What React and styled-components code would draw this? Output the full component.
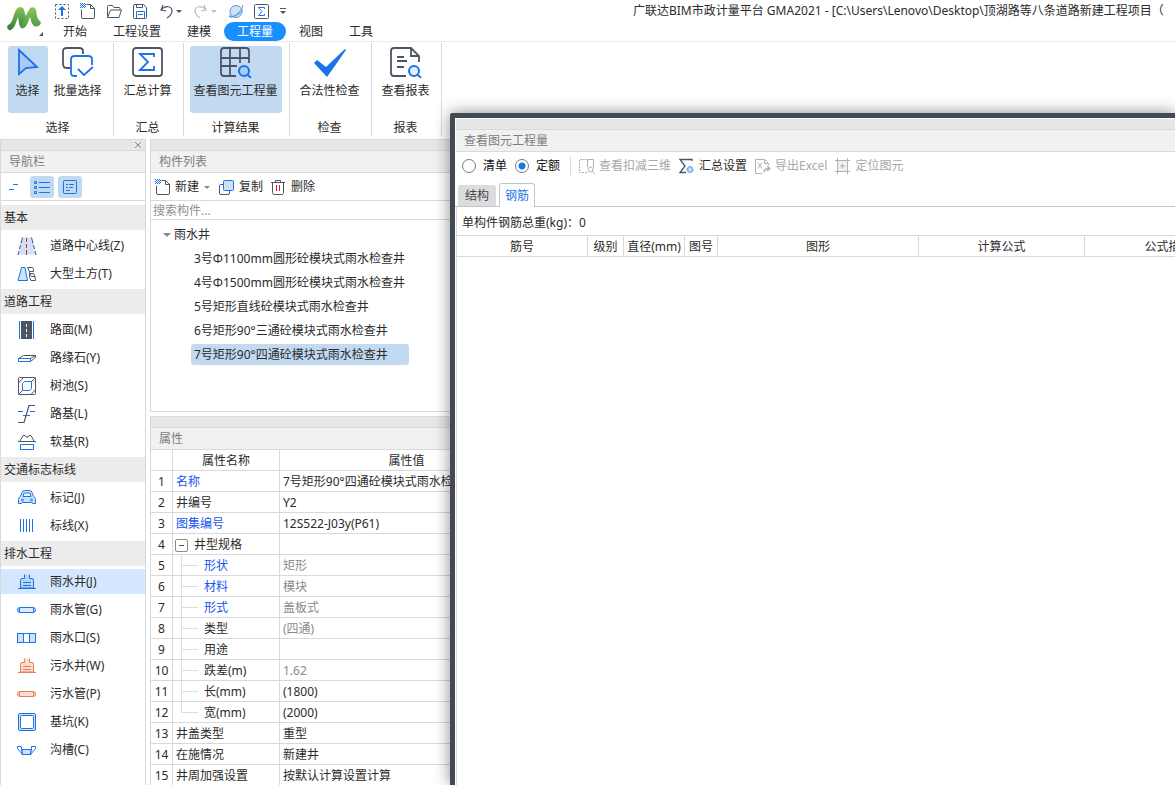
import React, { useState } from "react";
import styled, { createGlobalStyle } from "styled-components";

const BLUE = "#1a73e8";
const DARK = "#4d5464";
const PALE = "#cfe2fa";
const MUTED = "#b0b0b0";
const ORANGE = "#e8804f";
const LINE = "#d9d9d9";

const GlobalStyle = createGlobalStyle`
  *, *::before, *::after {
    box-sizing: border-box;
  }

  body {
    margin: 0;
    background: #fff;
  }

  body, button, input, table {
    font-family: "Noto Sans", "Noto Sans CJK SC", sans-serif;
    font-size: 12px;
    line-height: 16px;
    color: #2b2b2b;
  }

  button {
    border: 0;
    padding: 0;
    background: none;
    white-space: nowrap;
  }

  svg {
    display: block;
    flex: none;
  }
`;

const Page = styled.div`
  position: relative;
  display: flex;
  flex-direction: column;
  height: 100vh;
  overflow: hidden;
`;

/* ---------- header ---------- */

const Header = styled.header`
  display: grid;
  flex: none;
  grid-template-columns: 50px minmax(0, 1fr);
  border-bottom: 1px solid #ececec;
`;

const LogoButton = styled.button`
  grid-row: span 2;
`;

const TitleBar = styled.div`
  display: flex;
  align-items: center;
  height: 21px;
  padding-left: 4px;
`;

const QuickBar = styled.div`
  display: flex;
  flex: none;
  align-items: center;
  gap: 10px;
  width: 579px;
`;

const QuickButton = styled.button`
  display: flex;
  align-items: center;
  gap: 1px;
`;

const WindowTitle = styled.div`
  flex: 1;
  overflow: hidden;
  white-space: nowrap;
`;

const Menu = styled.nav`
  display: flex;
  padding-top: 1px;
`;

const MenuItem = styled.button`
  height: 19px;
  line-height: 19px;
  padding: 0 13px;
  border-radius: 10px;
  color: ${({ $active }) => ($active ? "#fff" : "#2b2b2b")};
  background: ${({ $active }) => ($active ? "#1890ff" : "transparent")};
`;

const Ribbon = styled.div`
  display: flex;
  flex: none;
  height: 97px;
  padding: 1px 0 3px 4px;
`;

const RibbonGroup = styled.section`
  display: flex;
  flex-direction: column;
  align-items: center;
  justify-content: space-between;
  width: ${({ $width }) => $width}px;
  padding: 3px 2px 0 0;
  border-right: 1px solid ${LINE};
`;

const RibbonButtons = styled.div`
  display: flex;
`;

const RibbonButton = styled.button`
  display: flex;
  flex-direction: column;
  align-items: center;
  gap: 5px;
  width: ${({ $width }) => $width}px;
  height: 67px;
  border-radius: 3px;
  background: ${({ $active }) => ($active ? "#c2d9f2" : "transparent")};
`;

/* ---------- panels ---------- */

const Body = styled.div`
  display: flex;
  flex: 1;
  gap: 4px;
  min-height: 0;
`;

const Panel = styled.section`
  display: flex;
  flex-direction: column;
  flex: ${({ $flex }) => $flex || "none"};
  width: ${({ $width }) => ($width ? `${$width}px` : "auto")};
  min-height: 0;
  overflow: hidden;
  border: 1px solid ${LINE};
  border-bottom: 0;
  background: #fff;
`;

const Strip = styled.div`
  display: flex;
  flex: none;
  align-items: center;
  justify-content: flex-end;
  height: 11px;
  padding-right: 3px;
  background: #e7e7e7;
  border-bottom: 1px solid ${LINE};
`;

const PanelTitle = styled.h2`
  flex: none;
  height: 22px;
  margin: 0;
  padding-left: 8px;
  font-size: 12px;
  font-weight: 400;
  line-height: 21px;
  color: #7d7d7d;
  background: #f1f1f1;
  border-bottom: 1px solid ${LINE};
`;

const ModeBar = styled.div`
  display: flex;
  flex: none;
  align-items: center;
  gap: 4px;
  height: 28px;
  padding-left: 1px;
  border-bottom: 1px solid ${LINE};
`;

const ModeButton = styled.button`
  display: flex;
  align-items: center;
  justify-content: center;
  width: 24px;
  height: 22px;
  border-radius: 3px;
  background: ${({ $active }) => ($active ? "#c2d9f2" : "transparent")};
`;

const NavList = styled.nav`
  display: flex;
  flex-direction: column;
  gap: 3px;
  padding-top: 4px;
`;

const NavHeading = styled.h3`
  height: 25px;
  margin: 0;
  padding-left: 3px;
  font-size: 12px;
  font-weight: 400;
  line-height: 25px;
  background: #ececec;
`;

const NavItem = styled.button`
  display: flex;
  align-items: center;
  gap: 13px;
  height: 25px;
  padding-left: 16px;
  background: ${({ $active }) => ($active ? "#d4e7ff" : "transparent")};
`;

const Middle = styled.div`
  display: flex;
  flex: none;
  flex-direction: column;
  gap: 4px;
  width: 385px;
`;

const ComponentPanel = styled(Panel)`
  height: 273px;
  border-bottom: 1px solid ${LINE};
`;

const ToolBar = styled.div`
  display: flex;
  flex: none;
  align-items: center;
  gap: 8px;
  height: 28px;
  padding-left: 4px;
  border-bottom: 1px solid ${LINE};
`;

const ToolButton = styled.button`
  display: flex;
  align-items: center;
  gap: 4px;
  color: ${({ disabled }) => (disabled ? "#a8a8a8" : "#2b2b2b")};
`;

const SearchInput = styled.input`
  flex: none;
  height: 19px;
  padding: 0 2px;
  border: 0;
  border-bottom: 1px solid ${LINE};
  outline: none;

  &::placeholder {
    color: #8f8f8f;
    opacity: 1;
  }
`;

const Tree = styled.div`
  display: flex;
  flex-direction: column;
  align-items: flex-start;
  gap: 3px;
  padding: 4px 0 0 12px;
`;

const TreeRoot = styled.button`
  display: flex;
  align-items: center;
  gap: 3px;
  height: 21px;
`;

const TreeLeaf = styled.button`
  width: 218px;
  height: 21px;
  margin-left: 28px;
  padding-left: 3px;
  text-align: left;
  border-radius: 3px;
  background: ${({ $active }) => ($active ? "#c2d9f2" : "transparent")};
`;

const Table = styled.table`
  flex: none;
  width: ${({ $width }) => ($width ? `${$width}px` : "100%")};
  table-layout: fixed;
  border-collapse: separate;
  border-spacing: 0;

  th, td {
    height: 21px;
    padding: 2px 3px 0;
    font-weight: 400;
    line-height: 18px;
    white-space: nowrap;
    overflow: hidden;
    border-right: 1px solid ${LINE};
    border-bottom: 1px solid ${LINE};
  }
`;

const IndexCell = styled.td`
  text-align: center;

  && {
    padding-left: 0;
    padding-right: 0;
  }
`;

const NameCell = styled.td`
  color: ${({ $link }) => ($link ? "#1554f0" : "#2b2b2b")};

  && {
    ${({ $child, $last }) =>
      $child &&
      `
      padding-left: 31px;
      background:
        linear-gradient(#dedede, #dedede) 8px 0 / 1px ${$last ? "10px" : "100%"} no-repeat,
        linear-gradient(#dedede, #dedede) 8px 10px / 17px 1px no-repeat;
    `}
  }
`;

const ValueCell = styled.td`
  color: ${({ $muted }) => ($muted ? "#8a8a8a" : "#2b2b2b")};
`;

const FoldLabel = styled.span`
  display: flex;
  align-items: center;
  gap: 6px;
  margin-left: -1px;
`;

const Fold = styled.button`
  display: flex;
  align-items: center;
  justify-content: center;
  width: 13px;
  height: 13px;
  border: 1px solid #8a8a8a;
  border-radius: 2px;
`;

/* ---------- quantity window ---------- */

const Dialog = styled.section`
  position: absolute;
  top: 113px;
  right: 0;
  bottom: 0;
  left: 450px;
  display: flex;
  flex-direction: column;
  overflow: hidden;
  background: #fff;
  border: solid #434a54;
  border-width: 5px 0 0 5px;
  border-radius: 3px 0 0 0;
  box-shadow: 0 0 16px rgba(0, 0, 0, 0.45);
`;

const DialogTop = styled.div`
  padding: 1px 0 0 1px;
`;

const DialogTools = styled.div`
  display: flex;
  align-items: center;
  gap: 8px;
  height: 28px;
  padding-left: 6px;
`;

const Radio = styled.label`
  display: flex;
  align-items: center;
  gap: 7px;
  color: #111;

  input {
    appearance: none;
    width: 14px;
    height: 14px;
    margin: 0;
    border: 1px solid #777;
    border-radius: 50%;
  }

  input:checked {
    background: radial-gradient(circle, ${BLUE} 3px, #fff 4px);
  }
`;

const Divider = styled.span`
  width: 1px;
  height: 18px;
  margin-left: 2px;
  background: ${LINE};
`;

const Tabs = styled.div`
  display: flex;
  align-items: flex-end;
  gap: 3px;
  height: 27px;
  padding-left: 3px;
  border-bottom: 1px solid #c4c4cc;
`;

const Tab = styled.button`
  height: ${({ $active }) => ($active ? 24 : 21)}px;
  padding: 0 ${({ $active }) => ($active ? 5 : 7)}px;
  margin-bottom: ${({ $active }) => ($active ? -1 : 0)}px;
  color: ${({ $active }) => ($active ? BLUE : "#444")};
  background: ${({ $active }) => ($active ? "#fff" : "#dcdcdc")};
  border: ${({ $active }) => ($active ? "1px solid #c4c4cc" : "0")};
  border-bottom: 0;
  border-radius: 3px 3px 0 0;
`;

const DialogContent = styled.div`
  flex: 1;
  margin-left: 1px;
  border-left: 1px solid ${LINE};
`;

const Summary = styled.p`
  height: 29px;
  margin: 0;
  padding-left: 5px;
  line-height: 32px;
  border-bottom: 1px solid ${LINE};
`;

/* ---------- icons ---------- */

const Icon = ({ size = 16, color = DARK, children }) => (
  <svg width={size} height={size} viewBox={`0 0 ${size} ${size}`} fill="none" stroke={color} aria-hidden="true">
    {children}
  </svg>
);

const Caret = ({ color = "#555", path = "M1 3h6L4 6z" }) => (
  <svg width="8" height="8" viewBox="0 0 8 8" aria-hidden="true">
    <path d={path} fill={color} />
  </svg>
);

const Logo = () => (
  <svg width="50" height="40" viewBox="0 0 50 40" fill="none" aria-hidden="true">
    <defs>
      <linearGradient id="leaf" x1="0" y1="0" x2="0" y2="1">
        <stop offset="0" stopColor="#8cc152" />
        <stop offset="1" stopColor="#2f7d42" />
      </linearGradient>
      <linearGradient id="leafLight" x1="0" y1="0" x2="0" y2="1">
        <stop offset="0" stopColor="#8fc457" />
        <stop offset="1" stopColor="#4a9a4c" />
      </linearGradient>
    </defs>
    <path d="M8 24c5-2 5-10 8-15 2-4 7-4 8 0l3 11-3 5c-3 2-5 0-5-3l-1-6c-2 5-3 11-7 13-3 1-5-3-3-5z" fill="url(#leaf)" />
    <path d="M21 24c3-4 5-11 8-15 2-4 6-3 7 0 1 5 1 9 4 11 3 3-3 8-7 4-2-2-2-5-3-8-2 5-3 9-6 11-3 1-5-1-3-3z" fill="url(#leafLight)" />
    <path d="M43 31v4h-4z" fill="#555" />
  </svg>
);

const NewIcon = () => (
  <Icon>
    <path d="M6.500 1.500h4l4 4v8.500q0 1.500-1.500 1.500h-10q-1.500 0-1.500-1.500v-7.500M10.500 1.500v4h4" />
    <path d="M0 .5h5M0 2.500h5M0 4.500h5" stroke={BLUE} strokeDasharray="1 1" />
    <path d="M1 1.500h5M1 3.500h5" stroke={BLUE} strokeDasharray="1 1" />
  </Icon>
);

const SigmaIcon = () => (
  <Icon>
    <rect x="0.500" y="1.500" width="14" height="14" rx="1" />
    <path d="M10.500 6v-1.500h-6l3.500 4-3.500 4h6v-1.500" stroke={BLUE} />
  </Icon>
);

const quickActions = [
  { label: "上传", icon: (
    <Icon>
      <rect x="1.500" y="1.500" width="13" height="14" strokeDasharray="2 2" />
      <path d="M8 3l4 4h-3v6h-2v-6h-3z" fill={BLUE} stroke="none" />
    </Icon>
  ) },
  { label: "新建工程", icon: <NewIcon /> },
  { label: "打开", icon: (
    <Icon>
      <path d="M1.500 14v-10.500q0-1 1-1h4l1.500 2h5q1 0 1 1v1.500M1.500 14.500l3-7.500h11l-2.500 7.500z" />
    </Icon>
  ) },
  { label: "保存", icon: (
    <Icon>
      <path d="M1.500 3q0-1.500 1.500-1.500h8.500l3 3v10q0 1-1 1h-11q-1 0-1-1zM4.500 1.500v3h6v-3" />
      <path d="M4.500 15.500v-7h8v7M6 11.500h5" stroke={BLUE} />
    </Icon>
  ) },
  { label: "撤销", menu: "#555", icon: (
    <Icon>
      <path d="M5 2L3 7l5 1M3 7c4-5 11-4 11 1 0 3-2 5-5 7" strokeWidth="1.200" />
    </Icon>
  ) },
  { label: "恢复", menu: "#bbb", icon: (
    <Icon color="#bbb">
      <path d="M11 2l2 5-5 1M13 7c-4-5-11-4-11 1 0 3 2 5 5 7" strokeWidth="1.200" />
    </Icon>
  ) },
  { label: "三维", icon: (
    <Icon color="#5b94de">
      <circle cx="8" cy="8.500" r="6" fill={PALE} />
      <path d="M2.500 11c-3 4 1 4.500 6 .5s8-9 5-9.500M1.500 13.500c3 1 11-2 13-7" />
    </Icon>
  ) },
  { label: "汇总计算", icon: <SigmaIcon /> },
];

const ribbonIcons = {
  select: (
    <Icon size={32} color={BLUE}>
      <path d="M7 4l18 17-11 1-7 6z" fill="#a9cbf5" strokeWidth="1.800" />
    </Icon>
  ),
  batch: (
    <Icon size={32}>
      <path d="M8 22h-3q-4 0-4-4v-13q0-3 4-3h12q4 0 4 3v3" strokeWidth="1.800" />
      <path d="M15 30h-2q-4 0-4-3v-14q0-3 4-3h13q4 0 4 3v6M16 23l6 6 9-8" stroke={BLUE} strokeWidth="1.800" />
    </Icon>
  ),
  sum: (
    <Icon size={32}>
      <rect x="1" y="2" width="29" height="28" rx="3" strokeWidth="1.800" />
      <path d="M22 11v-3h-14l8 8-8 8h14v-4" stroke={BLUE} strokeWidth="1.800" />
    </Icon>
  ),
  grid: (
    <Icon size={32}>
      <path d="M16 30h-12q-3 0-3-3v-22q0-3 3-3h22q3 0 3 3v12M1 12h28M1 20h16M10 2v28M20 2v15" strokeWidth="1.800" />
      <circle cx="24" cy="25" r="5" stroke={BLUE} strokeWidth="2" fill="#a9cbf5" />
      <path d="M27 28l4 4" stroke={BLUE} strokeWidth="2" />
    </Icon>
  ),
  check: (
    <Icon size={32}>
      <path d="M0 17l3-3 9 7 19-18 1 1-19 27z" fill={BLUE} stroke="none" />
    </Icon>
  ),
  report: (
    <Icon size={32}>
      <path d="M16 30h-12q-3 0-3-3v-22q0-3 3-3h17l8 8v6M21 2v8h8M7 11h7M7 15h10M7 21h7" strokeWidth="1.800" />
      <circle cx="24" cy="25" r="5" stroke={BLUE} strokeWidth="2" fill="#e6effb" />
      <path d="M27 28l4 4" stroke={BLUE} strokeWidth="2" />
    </Icon>
  ),
};

const WellIcon = ({ color, fill }) => (
  <Icon size={20} color={color}>
    <path d="M7.500 2.500v4h-2.500q-1.500 0-1.500 2v7.500h13v-7.500q0-2-1.500-2h-2.500v-4" fill={fill} />
    <path d="M1 16.500h18M6 10.500h8M6 13.500h8" />
  </Icon>
);

const PipeIcon = ({ color, fill }) => (
  <Icon size={20} color={color}>
    <rect x="0.500" y="7.500" width="18" height="5" rx="2.500" fill={fill} />
    <path d="M2.500 8v4M16.500 8v4" />
  </Icon>
);

const navIcons = {
  centerLine: (
    <Icon size={20}>
      <path d="M5.500 1.500h9l4 17h-17z" fill={PALE} stroke="none" />
      <path d="M5.500 1.500l-1.500 6M3.500 9l-1 4M2 15l-1 4M14.500 1.500l1.500 6M16.500 9l1 4M18 15l1 4" />
      <path d="M9.500 2v4M9.500 8v4M9.500 14v5" stroke="#e02020" />
    </Icon>
  ),
  earthwork: (
    <Icon size={20}>
      <path d="M4.500 3.500h3.500l2.500 13h-9.500z" fill={PALE} stroke={BLUE} />
      <path d="M10.500 3.500h5q1.500 2 1 4h-4zM12.500 9.500h4q2 4 2 7h-4.500q-2-3-1.500-7zM12.500 7.500v2l2 3h4" />
    </Icon>
  ),
  pavement: (
    <Icon size={20}>
      <path d="M4 1h11v18h-11z" fill={DARK} stroke="none" />
      <path d="M2.500 1v18M16.500 1v18" stroke={BLUE} />
      <path d="M9.500 4v3M9.500 9v3M9.500 14v3" stroke="#fff" />
    </Icon>
  ),
  curb: (
    <Icon size={20}>
      <path d="M1.500 10.500l5-3h12v2l-5 4M13.500 10.500l5-3" />
      <path d="M1.500 10.500h12v3h-12z" stroke={BLUE} />
    </Icon>
  ),
  treePit: (
    <Icon size={20}>
      <rect x="1.500" y="1.500" width="17" height="17" rx="1" />
      <path d="M1.500 7l5-5.500M14 18.500l4.500-5M1.500 18.500l4-4M14.500 5.500l4-4" />
      <path d="M5.500 7.500l2-2h7v7l-2 2h-7z" stroke={BLUE} />
    </Icon>
  ),
  subgrade: (
    <Icon size={20}>
      <path d="M1 18.500h6l5-17h6" strokeWidth="1.200" />
      <path d="M1 7.500h5M13 7.500h5M6 11.500h7" stroke={BLUE} />
    </Icon>
  ),
  softBase: (
    <Icon size={20}>
      <path d="M1 9.500h18M3 9l3-5.500h2l1 1.500h2l1-1.500h2l3 5.500" />
      <path d="M3.500 12.500h13v5h-13z" stroke={BLUE} />
    </Icon>
  ),
  marker: (
    <Icon size={20} color={BLUE}>
      <path d="M3.500 8.500l1.500-4q.5-2 2.500-2h5q2 0 2.500 2l1.500 4q2 1 2 3v4h-2.500l-1.500-1h-9l-1.500 1h-2.500v-4q0-2 2-3z" fill={PALE} />
      <path d="M6 8.500l1-3.500h6l1 3.500z" fill="#fff" />
      <circle cx="5.500" cy="12" r="1" fill="#fff" />
      <circle cx="14.500" cy="12" r="1" fill="#fff" />
    </Icon>
  ),
  stripes: (
    <Icon size={20} color={BLUE}>
      <path d="M3.500 3v13M6.500 3v13M9.500 3v13M12.500 3v13M15.500 3v13" />
    </Icon>
  ),
  rainWell: <WellIcon color={BLUE} fill="#b8d5f7" />,
  rainPipe: <PipeIcon color={BLUE} fill="#dbe9fb" />,
  inlet: (
    <Icon size={20} color={BLUE}>
      <rect x="0.500" y="5.500" width="18" height="9" fill={PALE} />
      <path d="M6.500 5.500h6v9h-6z" fill="#fff" />
    </Icon>
  ),
  sewageWell: <WellIcon color={ORANGE} fill="#f9ddcf" />,
  sewagePipe: <PipeIcon color={ORANGE} fill="#f9e0d4" />,
  pit: (
    <Icon size={20} color={BLUE}>
      <rect x="1.500" y="1.500" width="17" height="17" rx="1.500" fill={PALE} />
      <rect x="3.500" y="3.500" width="13" height="13" rx="1" fill="#fff" />
    </Icon>
  ),
  trench: (
    <Icon size={20} color={BLUE}>
      <path d="M5 9.500h9v5h-9z" fill={PALE} />
      <path d="M0.500 6.500h4v3l1 5-5-6zM18.500 6.500h-4v3l-1 5 5-6z" fill="#fff" />
    </Icon>
  ),
};

/* ---------- data ---------- */

const menus = ["开始", "工程设置", "建模", "工程量", "视图", "工具"];

const ribbonGroups = [
  { title: "选择", width: 110, items: [
    { label: "选择", icon: "select", width: 40, active: true },
    { label: "批量选择", icon: "batch", width: 60 },
  ] },
  { title: "汇总", width: 70, items: [{ label: "汇总计算", icon: "sum", width: 60 }] },
  { title: "计算结果", width: 106, items: [{ label: "查看图元工程量", icon: "grid", width: 92, active: true }] },
  { title: "检查", width: 82, items: [{ label: "合法性检查", icon: "check", width: 72 }] },
  { title: "报表", width: 70, items: [{ label: "查看报表", icon: "report", width: 60 }] },
];

const navSections = [
  { title: "基本", items: [["道路中心线(Z)", "centerLine"], ["大型土方(T)", "earthwork"]] },
  { title: "道路工程", items: [
    ["路面(M)", "pavement"],
    ["路缘石(Y)", "curb"],
    ["树池(S)", "treePit"],
    ["路基(L)", "subgrade"],
    ["软基(R)", "softBase"],
  ] },
  { title: "交通标志标线", items: [["标记(J)", "marker"], ["标线(X)", "stripes"]] },
  { title: "排水工程", items: [
    ["雨水井(J)", "rainWell"],
    ["雨水管(G)", "rainPipe"],
    ["雨水口(S)", "inlet"],
    ["污水井(W)", "sewageWell"],
    ["污水管(P)", "sewagePipe"],
    ["基坑(K)", "pit"],
    ["沟槽(C)", "trench"],
  ] },
];

const wells = [
  "3号Φ1100mm圆形砼模块式雨水检查井",
  "4号Φ1500mm圆形砼模块式雨水检查井",
  "5号矩形直线砼模块式雨水检查井",
  "6号矩形90°三通砼模块式雨水检查井",
  "7号矩形90°四通砼模块式雨水检查井",
];

const properties = [
  { name: "名称", value: "7号矩形90°四通砼模块式雨水检查井", link: true },
  { name: "井编号", value: "Y2" },
  { name: "图集编号", value: "12S522-J03y(P61)", link: true },
  { name: "井型规格", value: "", fold: true },
  { name: "形状", value: "矩形", link: true, child: true, muted: true },
  { name: "材料", value: "模块", link: true, child: true, muted: true },
  { name: "形式", value: "盖板式", link: true, child: true, muted: true },
  { name: "类型", value: "(四通)", child: true, muted: true },
  { name: "用途", value: "", child: true },
  { name: "跌差(m)", value: "1.62", child: true, muted: true },
  { name: "长(mm)", value: "(1800)", child: true },
  { name: "宽(mm)", value: "(2000)", child: true, last: true },
  { name: "井盖类型", value: "重型" },
  { name: "在施情况", value: "新建井" },
  { name: "井周加强设置", value: "按默认计算设置计算" },
];

const barColumns = [
  ["筋号", 131],
  ["级别", 36],
  ["直径(mm)", 61],
  ["图号", 33],
  ["图形", 201],
  ["计算公式", 166],
  ["公式描述", 168],
];

/* ---------- parts ---------- */

const AppHeader = () => {
  const [menu, setMenu] = useState("工程量");

  return (
    <Header>
      <LogoButton aria-label="应用菜单"><Logo /></LogoButton>
      <TitleBar>
        <QuickBar>
          {quickActions.map((action) => (
            <QuickButton key={action.label} aria-label={action.label}>
              {action.icon}
              {action.menu && <Caret color={action.menu} />}
            </QuickButton>
          ))}
          <QuickButton aria-label="自定义快速访问">
            <svg width="6" height="8" viewBox="0 0 6 8"><path d="M0 1h6v1H0zM0 4h6L3 7z" fill="#555" /></svg>
          </QuickButton>
        </QuickBar>
        <WindowTitle>
          {"广联达BIM市政计量平台 GMA2021 - [C:\\Users\\Lenovo\\Desktop\\顶湖路等八条道路新建工程项目（"}
        </WindowTitle>
      </TitleBar>
      <Menu>
        {menus.map((item) => (
          <MenuItem key={item} $active={item === menu} onClick={() => setMenu(item)}>{item}</MenuItem>
        ))}
      </Menu>
    </Header>
  );
};

const Navigation = () => {
  const [selected, setSelected] = useState("雨水井(J)");

  return (
    <Panel $width={146}>
      <Strip>
        <button aria-label="关闭">
          <svg width="8" height="8" viewBox="0 0 8 8">
            <path d="M1 1l6 6M7 1L1 7" stroke="#888" />
          </svg>
        </button>
      </Strip>
      <PanelTitle>导航栏</PanelTitle>
      <ModeBar>
        <ModeButton aria-label="折叠">
          <Icon color={BLUE}><path d="M3 10.500h5M7 5.500h5" /></Icon>
        </ModeButton>
        <ModeButton $active aria-label="列表">
          <Icon color={BLUE}>
            <path d="M5 3.500h11M5 8.500h11M5 13.500h11" />
            <path d="M.5 2.500h2v2h-2zM.5 7.500h2v2h-2zM.5 12.500h2v2h-2z" />
          </Icon>
        </ModeButton>
        <ModeButton $active aria-label="详情">
          <Icon color={BLUE}>
            <rect x="1.500" y="1.500" width="13" height="13" rx="1" />
            <path d="M4 5.500h2M7 5.500h5M4 8.500h2M7 8.500h4M4 11.500h4" />
          </Icon>
        </ModeButton>
      </ModeBar>
      <NavList>
        {navSections.map((section) => (
          <React.Fragment key={section.title}>
            <NavHeading>{section.title}</NavHeading>
            {section.items.map(([label, icon]) => (
              <NavItem key={label} $active={label === selected} onClick={() => setSelected(label)}>
                {navIcons[icon]}
                {label}
              </NavItem>
            ))}
          </React.Fragment>
        ))}
      </NavList>
    </Panel>
  );
};

const Components = () => {
  const [selected, setSelected] = useState(wells[4]);

  return (
    <ComponentPanel>
      <Strip />
      <PanelTitle>构件列表</PanelTitle>
      <ToolBar>
        <ToolButton><NewIcon />新建<Caret color="#888" /></ToolButton>
        <ToolButton>
          <Icon>
            <path d="M4.500 5.500h-3q-1 0-1 1v7.500q0 1.500 1.500 1.500h7q1.500 0 1.500-1.500v-2" />
            <rect x="4.500" y="1.500" width="10" height="10" rx="1" fill={PALE} stroke={BLUE} />
          </Icon>
          复制
        </ToolButton>
        <ToolButton>
          <Icon>
            <path d="M0 3.500h14M4.500 3.500v-2h5v2M1.500 3.500v10q0 2 2 2h7q2 0 2-2v-10" />
            <path d="M5.500 6v6M8.500 6v6" stroke="#e02020" />
          </Icon>
          删除
        </ToolButton>
      </ToolBar>
      <SearchInput placeholder="搜索构件..." aria-label="搜索构件" />
      <Tree>
        <TreeRoot><Caret color="#888" path="M0 2h8L4 6z" />雨水井</TreeRoot>
        {wells.map((well) => (
          <TreeLeaf key={well} $active={well === selected} onClick={() => setSelected(well)}>{well}</TreeLeaf>
        ))}
      </Tree>
    </ComponentPanel>
  );
};

const Properties = () => (
  <Panel $flex={1}>
    <Strip />
    <PanelTitle>属性</PanelTitle>
    <Table>
      <colgroup>
        <col width="22" />
        <col width="107" />
        <col />
      </colgroup>
      <thead>
        <tr>
          <th aria-label="序号" />
          <th>属性名称</th>
          <th>属性值</th>
        </tr>
      </thead>
      <tbody>
        {properties.map((row, index) => (
          <tr key={row.name}>
            <IndexCell>{index + 1}</IndexCell>
            <NameCell $link={row.link} $child={row.child} $last={row.last}>
              {row.fold ? (
                <FoldLabel>
                  <Fold aria-label="折叠">
                    <svg width="5" height="1" viewBox="0 0 5 1"><path d="M0 0h5v1H0z" fill="#555" /></svg>
                  </Fold>
                  {row.name}
                </FoldLabel>
              ) : row.name}
            </NameCell>
            <ValueCell $muted={row.muted}>{row.value}</ValueCell>
          </tr>
        ))}
      </tbody>
    </Table>
  </Panel>
);

const QuantityDialog = () => {
  const [mode, setMode] = useState("定额");
  const [tab, setTab] = useState("钢筋");

  return (
    <Dialog>
      <DialogTop>
        <Strip />
        <PanelTitle>查看图元工程量</PanelTitle>
        <DialogTools>
          {["清单", "定额"].map((item) => (
            <Radio key={item}>
              <input type="radio" name="mode" checked={mode === item} onChange={() => setMode(item)} />
              {item}
            </Radio>
          ))}
          <Divider />
          <ToolButton disabled>
            <Icon color={MUTED}>
              <path d="M8 14.500h-7.500v-13h8" strokeDasharray="2 1" />
              <path d="M8.500 9v-7.500h6v8" />
              <circle cx="11.500" cy="11.500" r="2.500" />
              <path d="M13 13l3 3" />
            </Icon>
            查看扣减三维
          </ToolButton>
          <ToolButton>
            <Icon>
              <path d="M13 3v-1.500h-12l5 6.500-5 6.500h6" strokeWidth="1.300" />
              <circle cx="11" cy="11.500" r="3" fill="#9cc4f5" stroke={BLUE} strokeDasharray="1 1" />
              <circle cx="11" cy="11.500" r="1" fill="#fff" stroke="none" />
            </Icon>
            汇总设置
          </ToolButton>
          <ToolButton disabled>
            <Icon color={MUTED}>
              <path d="M7 15.500h-6.500v-14h9l4 4v2M9.500 1.500v4h4M3 4.500l4 6M7 4.500l-4 6" />
              <path d="M9 14.500q0-4 5-4M12 8l3 2.500-3 2.500" strokeWidth="1.300" />
            </Icon>
            导出Excel
          </ToolButton>
          <ToolButton disabled>
            <Icon color={MUTED}>
              <path d="M2.500 2.500h10v11h-10z" fill="#f0f0f0" />
              <path d="M0 2.500h15M0 13.500h15M2.500 0v16M12.500 0v16M7.500 5.500v5M5 8h5" />
            </Icon>
            定位图元
          </ToolButton>
        </DialogTools>
      </DialogTop>
      <Tabs>
        {["结构", "钢筋"].map((item) => (
          <Tab key={item} $active={item === tab} onClick={() => setTab(item)}>{item}</Tab>
        ))}
      </Tabs>
      <DialogContent>
        <Summary>单构件钢筋总重(kg)：0</Summary>
        <Table $width={796}>
          <colgroup>
            {barColumns.map(([name, width]) => <col key={name} width={width} />)}
          </colgroup>
          <thead>
            <tr>
              {barColumns.map(([name]) => <th key={name}>{name}</th>)}
            </tr>
          </thead>
        </Table>
      </DialogContent>
    </Dialog>
  );
};

const App = () => (
  <Page>
    <GlobalStyle />
    <AppHeader />
    <Ribbon>
      {ribbonGroups.map((group) => (
        <RibbonGroup key={group.title} $width={group.width}>
          <RibbonButtons>
            {group.items.map((item) => (
              <RibbonButton key={item.label} $width={item.width} $active={item.active}>
                {ribbonIcons[item.icon]}
                {item.label}
              </RibbonButton>
            ))}
          </RibbonButtons>
          {group.title}
        </RibbonGroup>
      ))}
    </Ribbon>
    <Body>
      <Navigation />
      <Middle>
        <Components />
        <Properties />
      </Middle>
    </Body>
    <QuantityDialog />
  </Page>
);

export default App;
